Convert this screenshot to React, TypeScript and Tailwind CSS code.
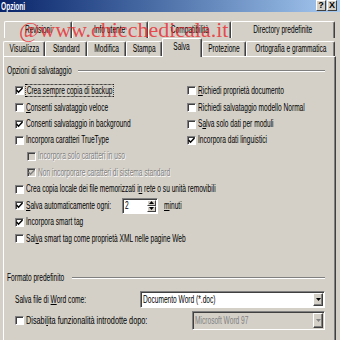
import React from "react";

const font = '"Liberation Sans", Arial, sans-serif';

// the reference is squeezed horizontally, so text is drawn narrow
const T = ({
  children,
  className = "",
  origin = "origin-left",
  scale = "scale-x-[0.66]",
}: {
  children: React.ReactNode;
  className?: string;
  origin?: string;
  scale?: string;
}) => <span className={`inline-block whitespace-nowrap ${origin} ${scale} ${className}`}>{children}</span>;

const Tab = ({ label, className = "", selected = false }: { label: string; className?: string; selected?: boolean }) => (
  <div
    className={`flex items-center justify-center shrink-0 bg-[#d4d0c8] border-t border-l border-white border-r border-r-[#404040] rounded-t-[2px] shadow-[inset_-1px_0_0_#808080] ${
      selected ? "relative z-10 h-[19px] -mb-px pb-[2px]" : "h-[15px]"
    } ${className}`}
  >
    <T origin="origin-center">{label}</T>
  </div>
);

const BackTab = ({ label, className = "" }: { label: string; className?: string }) => (
  <div
    className={`flex items-center justify-center shrink-0 h-[17px] bg-[#d4d0c8] border-t border-l border-white border-r border-r-[#404040] rounded-t-[2px] shadow-[inset_-1px_0_0_#808080] ${className}`}
  >
    <T origin="origin-center">{label}</T>
  </div>
);

const Check = ({ checked = false, disabled = false }: { checked?: boolean; disabled?: boolean }) => (
  <div
    className={`shrink-0 w-[9px] h-[9px] border border-t-[#808080] border-l-[#808080] border-b-white border-r-white shadow-[inset_1px_1px_0_#404040] flex items-center justify-center ${
      disabled ? "bg-[#d4d0c8]" : "bg-white"
    }`}
  >
    {checked && (
      <svg width="7" height="7" viewBox="0 0 7 7">
        <path d="M0.5 3 L2.5 5.2 L6.5 1" fill="none" stroke={disabled ? "#808080" : "#000"} strokeWidth="1.5" />
      </svg>
    )}
  </div>
);

const Row = ({
  children,
  checked = false,
  disabled = false,
  className = "h-[17px]",
  scale,
}: {
  children: React.ReactNode;
  checked?: boolean;
  disabled?: boolean;
  className?: string;
  scale?: string;
}) => (
  <div className={`flex items-center ${className}`}>
    <Check checked={checked} disabled={disabled} />
    <T scale={scale} className={`ml-[2px] ${disabled ? "text-[#808080] [text-shadow:1px_1px_0_#fff]" : ""}`}>
      {children}
    </T>
  </div>
);

const GroupHeader = ({ label, w, className = "" }: { label: string; w: string; className?: string }) => (
  <div className={`flex items-center h-[14px] pl-[3px] pr-[10px] ${className}`}>
    <div className={`shrink-0 ${w}`}>
      <T>{label}</T>
    </div>
    <div className="flex-1 h-[2px] border-t border-t-[#808080] border-b border-b-white" />
  </div>
);

const Arrow = ({ up = false, color = "#000" }: { up?: boolean; color?: string }) => (
  <svg width="5" height="3" viewBox="0 0 5 3">
    <path d={up ? "M0 3 L2.5 0 L5 3 Z" : "M0 0 L5 0 L2.5 3 Z"} fill={color} />
  </svg>
);

const DropButton = ({ disabled = false }: { disabled?: boolean }) => (
  <div className="shrink-0 w-[10px] h-full bg-[#d4d0c8] border border-t-white border-l-white border-b-[#404040] border-r-[#404040] shadow-[inset_-1px_-1px_0_#808080] flex items-center justify-center">
    <Arrow color={disabled ? "#808080" : "#000"} />
  </div>
);

const Sunken = ({ className = "", children }: { className?: string; children: React.ReactNode }) => (
  <div
    className={`flex border border-t-[#808080] border-l-[#808080] border-b-white border-r-white shadow-[inset_1px_1px_0_#404040] p-[1px] ${className}`}
  >
    {children}
  </div>
);

export default function App() {
  return (
    <div
      className="relative w-[340px] h-[340px] overflow-hidden bg-[#d4d0c8] text-black text-[10px] leading-none flex flex-col"
      style={{ fontFamily: font }}
    >
      {/* title bar */}
      <div className="flex items-start justify-between h-[12px] shrink-0 bg-gradient-to-r from-[#0a246a] to-[#a6caf0]">
        <T className="ml-[1px] mt-[2px] text-white font-bold">Opzioni</T>
        <div className="flex mr-[3px]">
          <div className="w-[10px] h-[11px] bg-[#d4d0c8] border border-t-white border-l-white border-b-[#404040] border-r-[#404040] flex items-center justify-center font-bold text-[9px]">
            ?
          </div>
          <div className="ml-[1px] w-[10px] h-[11px] bg-[#d4d0c8] border border-t-white border-l-white border-b-[#404040] border-r-[#404040] flex items-center justify-center font-bold text-[9px]">
            X
          </div>
        </div>
      </div>

      {/* tabs */}
      <div className="flex mt-[9px] pl-[4px] shrink-0">
        <BackTab label="Revisioni" className="w-[68px]" />
        <BackTab label="Info utente" className="w-[76px]" />
        <BackTab label="Compatibilità" className="w-[83px]" />
        <BackTab label="Directory predefinite" className="w-[104px]" />
      </div>
      <div className="flex items-end h-[18px] pl-[3px] shrink-0">
        <Tab label="Visualizza" className="w-[42px]" />
        <Tab label="Standard" className="w-[42px]" />
        <Tab label="Modifica" className="w-[39px]" />
        <Tab label="Stampa" className="w-[36px]" />
        <Tab label="Salva" className="w-[40px]" selected />
        <Tab label="Protezione" className="w-[44px]" />
        <Tab label="Ortografia e grammatica" className="w-[89px]" />
      </div>

      {/* panel */}
      <div className="ml-[3px] w-[333px] flex-1 min-h-[300px] border-t border-l border-white border-r border-r-[#404040] shadow-[inset_-1px_0_0_#808080] flex flex-col">
        <GroupHeader label="Opzioni di salvataggio" w="w-[71px]" className="mt-[7px]" />

        <div className="flex mt-[4px]">
          <div className="w-[183px] shrink-0 pl-[11px] flex flex-col">
            <Row checked className="h-[17px]">
              <span className="outline outline-1 outline-dotted outline-black px-[1px]">Crea sempre copia di backup</span>
            </Row>
            <Row className="h-[17px]">
              <u>C</u>onsenti salvataggio veloce
            </Row>
            <Row checked className="h-[16px]">
              Consenti salvataggio in background
            </Row>
            <Row className="h-[16px]">Incorpora caratteri TrueType</Row>
            <div className="ml-[12px]">
              <Row disabled className="h-[16px]">
                Incorpora solo caratteri in uso
              </Row>
              <Row disabled checked className="h-[17px]">
                Non incorporare caratteri di sistema standard
              </Row>
            </div>
          </div>
          <div className="flex flex-col">
            <Row className="h-[17px]">
              <u>R</u>ichiedi proprietà documento
            </Row>
            <Row className="h-[17px]">
              Richiedi salvatag<u>g</u>io modello Normal
            </Row>
            <Row className="h-[16px]">
              S<u>a</u>lva solo dati per moduli
            </Row>
            <Row checked className="h-[16px]">
              Incorpora dati linguistici
            </Row>
          </div>
        </div>

        <div className="pl-[11px] flex flex-col">
          <Row className="h-[16px]">
            Crea copia locale dei file memorizzati i<u>n</u> rete o su unità removibili
          </Row>
          <div className="flex items-center h-[17px]">
            <Check checked />
            <div className="ml-[2px] w-[96px] shrink-0">
              <T>
                <u>S</u>alva automaticamente ogni:
              </T>
            </div>
            <Sunken className="w-[36px] h-[16px] bg-white shrink-0">
              <span className="flex-1 flex items-center pl-[1px]">
                <T>2</T>
              </span>
              <div className="w-[9px] flex flex-col">
                <div className="flex-1 bg-[#d4d0c8] border border-t-white border-l-white border-b-[#404040] border-r-[#404040] flex items-center justify-center">
                  <Arrow up />
                </div>
                <div className="flex-1 bg-[#d4d0c8] border border-t-white border-l-white border-b-[#404040] border-r-[#404040] flex items-center justify-center">
                  <Arrow />
                </div>
              </div>
            </Sunken>
            <T className="ml-[6px]">
              <u>m</u>inuti
            </T>
          </div>
          <Row checked className="h-[16px]">
            Incorpora smart tag
          </Row>
          <Row className="h-[17px]">
            Sal<u>v</u>a smart tag come proprietà XML nelle pagine Web
          </Row>
        </div>

        <GroupHeader label="Formato predefinito" w="w-[65px]" className="mt-[24px]" />

        <div className="flex items-center h-[17px] mt-[6px]">
          <div className="w-[136px] shrink-0 pl-[11px]">
            <T>
              Salva file di <u>W</u>ord come:
            </T>
          </div>
          <Sunken className="w-[185px] h-[17px] bg-white shrink-0">
            <span className="flex-1 min-w-0 flex items-center pl-[1px]">
              <T>Documento Word (*.doc)</T>
            </span>
            <DropButton />
          </Sunken>
        </div>

        <div className="flex items-center h-[19px] mt-[3px]">
          <div className="w-[188px] shrink-0 pl-[11px]">
            <Row className="h-[19px]" scale="scale-x-[0.73]">
              Disabi<u>l</u>ita funzionalità introdotte dopo:
            </Row>
          </div>
          <Sunken className="w-[133px] h-[19px] bg-[#d4d0c8] shrink-0">
            <span className="flex-1 min-w-0 flex items-center pl-[1px] text-[#808080]">
              <T>Microsoft Word 97</T>
            </span>
            <DropButton disabled />
          </Sunken>
        </div>
      </div>

      {/* watermark */}
      <div
        className="absolute left-[19px] top-[19px] text-[22px] leading-none text-[#e8262b]/80 whitespace-nowrap pointer-events-none"
        style={{ fontFamily: '"Liberation Serif", "Times New Roman", serif' }}
      >
        @www.chicchedicala.it
      </div>
    </div>
  );
}
